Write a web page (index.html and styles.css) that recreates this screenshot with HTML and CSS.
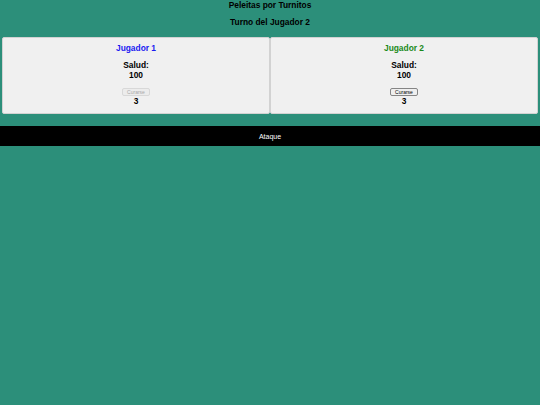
FILE: index.html
```html
<!DOCTYPE html>
<html lang="es">
<head>
<meta charset="utf-8">
<title>Peleitas por Turnitos</title>
<link rel="stylesheet" href="styles.css">
</head>
<body>
<h1 class="title">Peleitas por Turnitos</h1>
<h2 class="turn">Turno del Jugador 2</h2>
<div class="players">
  <div class="card">
    <h3 class="name p1">Jugador 1</h3>
    <div class="health">Salud:<br>100</div>
    <button class="heal" disabled>Curarse</button>
    <div class="count">3</div>
  </div>
  <div class="card">
    <h3 class="name p2">Jugador 2</h3>
    <div class="health">Salud:<br>100</div>
    <button class="heal">Curarse</button>
    <div class="count">3</div>
  </div>
</div>
<button class="attack">Ataque</button>
</body>
</html>
```
FILE: styles.css
```css
html, body {
  margin: 0;
  padding: 0;
  background: #2c8f7a;
  font-family: "Liberation Sans", Arial, sans-serif;
  color: #000;
}
.title {
  margin: 0;
  font-size: 8.4px;
  line-height: 10px;
  font-weight: bold;
  text-align: center;
}
.turn {
  margin: 7px 0 0;
  font-size: 8.4px;
  line-height: 10px;
  font-weight: bold;
  text-align: center;
}
.players {
  display: flex;
  padding: 0 2px;
  margin-top: 10px;
}
.card {
  flex: 1;
  background: #f0f0f0;
  border: 1px solid #d2d2d2;
  border-radius: 2px;
  text-align: center;
  padding: 5px 0 7px;
  display: flex;
  flex-direction: column;
  align-items: center;
}
.name {
  margin: 0;
  font-size: 8.4px;
  line-height: 10px;
  font-weight: bold;
}
.p1 { color: #1a1af0; }
.p2 { color: #1a8a1a; }
.health {
  margin-top: 7px;
  font-size: 8.4px;
  line-height: 10px;
  font-weight: bold;
}
.heal {
  margin-top: 8px;
  font-family: "Liberation Sans", Arial, sans-serif;
  font-size: 5px;
  line-height: 6px;
  height: 8px;
  padding: 0 4px;
  background: #efefef;
  color: #000;
  border: 1px solid #858585;
  border-radius: 2px;
}
.heal:disabled {
  color: #a8a8a8;
  border-color: #d8d8d8;
  background: #ececec;
}
.count {
  font-size: 8.4px;
  line-height: 10px;
  font-weight: bold;
}
.attack {
  display: block;
  width: 100%;
  height: 20px;
  margin-top: 12px;
  background: #000;
  color: #fff;
  border: none;
  font-family: "Liberation Sans", Arial, sans-serif;
  font-size: 7px;
  padding: 0;
}
```
